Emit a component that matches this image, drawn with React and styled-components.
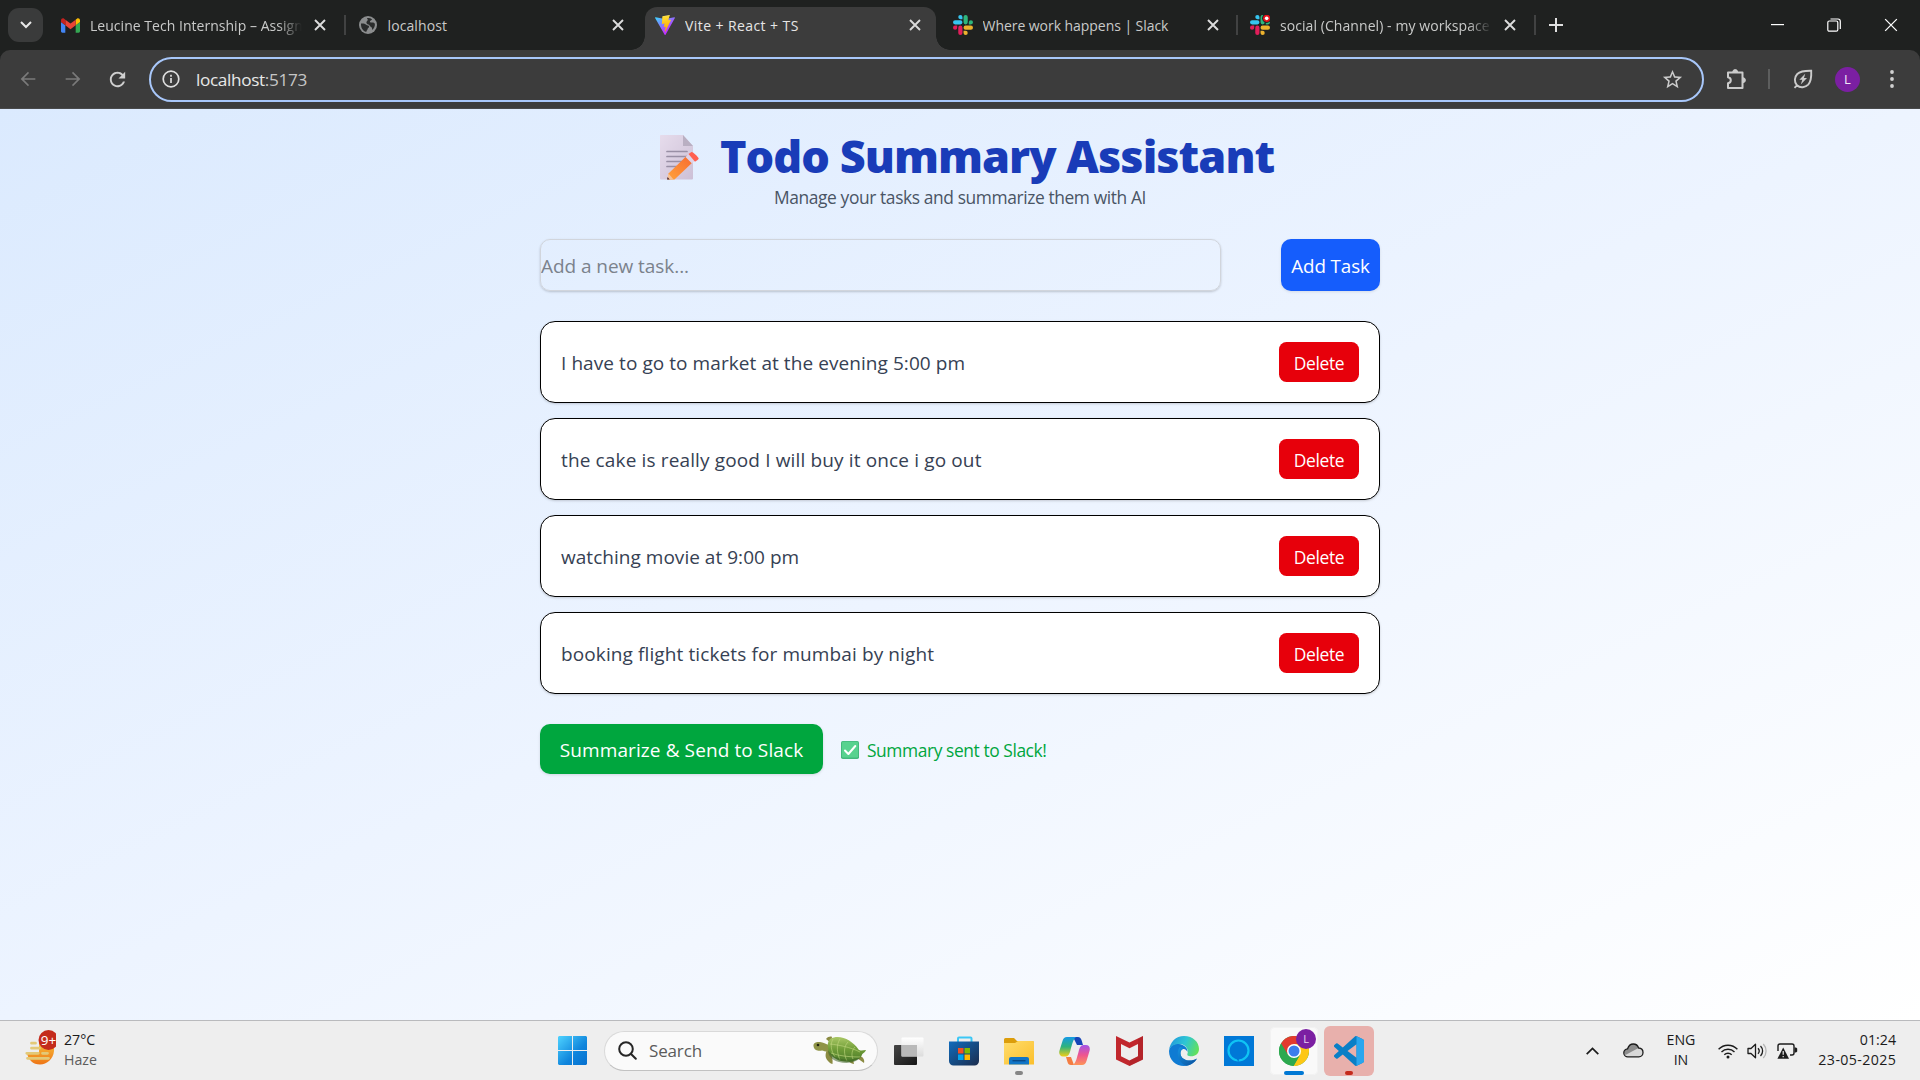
import React from "react";
import styled, { createGlobalStyle, css } from "styled-components";

const Global = createGlobalStyle`
  *, *::before, *::after { box-sizing: border-box; }
  body { margin: 0; overflow: hidden; font-family: "Open Sans", "Noto Sans", sans-serif; }
  button, input { font: inherit; border: 0; padding: 0; margin: 0; background: none; color: inherit; }
  svg { display: block; flex: none; }
  h1, p, ul { margin: 0; padding: 0; }
`;

const Screen = styled.div`
  width: 1920px;
  height: 1080px;
  display: flex;
  flex-direction: column;
  overflow: hidden;
`;

/* ---------- browser tab strip ---------- */

const TabStrip = styled.div`
  height: 50px;
  flex: none;
  display: flex;
  align-items: stretch;
  background: #1f2120;
  padding-left: 8px;
`;

const TabSearch = styled.button`
  width: 35px;
  height: 34px;
  margin: 8px 4px 0 0;
  border-radius: 11px;
  background: #3a3b3b;
  display: grid;
  place-items: center;
`;

const TabCell = styled.div`
  position: relative;
  width: 297.5px;
  flex: none;
  display: flex;
  align-items: center;
  padding: 0 14px 0 13px;
  color: ${(p) => (p.$active ? "#e6e6e6" : "#c9cac9")};
  ${(p) =>
    p.$divider &&
    css`
      &::after {
        content: "";
        position: absolute;
        right: -1px;
        top: 15px;
        width: 2px;
        height: 20px;
        background: #414242;
      }
    `}
  ${(p) =>
    p.$active &&
    css`
      &::before {
        content: "";
        position: absolute;
        z-index: 0;
        left: 3px;
        right: 4px;
        top: 7px;
        bottom: 0;
        border-radius: 12px 12px 0 0;
        background: #3c3c3c;
      }
    `}
`;

const TabFlare = styled.span`
  position: absolute;
  bottom: 0;
  width: 14px;
  height: 14px;
  ${(p) => (p.$side === "left" ? "left: -11px;" : "right: -10px;")}
  background: radial-gradient(
    circle at ${(p) => (p.$side === "left" ? "0 0" : "100% 0")},
    transparent 13.5px,
    #3c3c3c 14px
  );
`;

const TabIcon = styled.span`
  position: relative;
  width: 20px;
  margin-right: 10px;
  display: flex;
  justify-content: center;
`;

const TabTitle = styled.span`
  position: relative;
  width: 214px;
  padding-top: 1px;
  overflow: hidden;
  white-space: nowrap;
  font-size: 14px;
  line-height: 22px;
  letter-spacing: ${(p) => p.$track || 0}px;
  ${(p) => p.$fade && "mask-image: linear-gradient(90deg, #000 188px, transparent 212px);"}
`;

const TabClose = styled.button`
  position: relative;
  width: 20px;
  margin-left: 6px;
  display: grid;
  place-items: center;
`;

const NewTab = styled.button`
  width: 42px;
  display: grid;
  place-items: center;
`;

const WindowControls = styled.div`
  margin-left: auto;
  display: flex;
  align-items: center;
`;

const WindowButton = styled.button`
  width: ${(p) => p.$w}px;
  height: 50px;
  display: grid;
  place-items: center;
`;

/* ---------- browser toolbar ---------- */

const ToolbarBack = styled.div`
  flex: none;
  background: #1f2120;
`;

const Toolbar = styled.div`
  height: 59px;
  display: flex;
  align-items: center;
  background: #3c3c3c;
  border-radius: 10px 10px 0 0;
  box-shadow: inset 0 -1px #494a4b;
  padding: 0 0 1px 5px;
  color: #c7c7c7;
`;

const NavButton = styled.button`
  width: 45px;
  flex: none;
  height: 40px;
  display: grid;
  place-items: center;
  color: ${(p) => (p.$dim ? "#7a7a7a" : "#cfcfcf")};
`;

const Omnibox = styled.div`
  width: 1555px;
  flex: none;
  height: 45px;
  margin-left: 9px;
  display: flex;
  align-items: center;
  border: 2.5px solid #a8c7fa;
  border-radius: 23px;
  padding: 0 18px 0 11px;
`;

const Url = styled.span`
  flex: 1;
  margin-left: 16px;
  font-size: 17.2px;
  letter-spacing: ${(p) => p.$track || 0}px;
  color: #e8e8e8;
  span { color: #c6c6c6; }
`;

const ToolSlot = styled.div`
  width: ${(p) => p.$w}px;
  padding-left: ${(p) => p.$pl || 0}px;
  flex: none;
  display: grid;
  place-items: center;
`;

const ToolDivider = styled.div`
  width: 2px;
  height: 20px;
  background: #5d5e5e;
`;

const Avatar = styled.div`
  width: 25px;
  height: 25px;
  border-radius: 50%;
  display: grid;
  place-items: center;
  background: #7b1fa2;
  color: #f3e6f8;
  font-size: 13px;
`;

/* ---------- page ---------- */

const Page = styled.main`
  height: 911px;
  flex: none;
  padding-top: 21px;
  display: flex;
  flex-direction: column;
  align-items: center;
  background: linear-gradient(to bottom right, #dbeafe, #edf4ff 50%, #ffffff);
`;

const Column = styled.div`
  width: 840px;
  display: flex;
  flex-direction: column;
`;

const TitleRow = styled.div`
  height: 52px;
  display: flex;
  padding: 5px 0 0 119px;
  gap: 21px;
`;

const Title = styled.h1`
  margin-top: -4px;
  font-size: 45px;
  line-height: 50px;
  font-weight: 800;
  letter-spacing: ${(p) => p.$track || 0}px;
  white-space: nowrap;
  color: #193cb8;
`;

const Subtitle = styled.p`
  height: 30px;
  line-height: 31px;
  text-align: center;
  font-size: 17.4px;
  letter-spacing: ${(p) => p.$track || 0}px;
  color: #4a5565;
`;

const EntryRow = styled.div`
  margin-top: 27px;
  display: flex;
  justify-content: space-between;
`;

const TaskInput = styled.input`
  width: 681px;
  height: 52px;
  border: 1.25px solid #d1d5dc;
  border-radius: 10px;
  padding: 2px 0 0 0;
  box-shadow: 0 1px 3px rgba(0, 0, 0, 0.1), 0 1px 2px rgba(0, 0, 0, 0.1);
  font-size: 19px;
  letter-spacing: ${(p) => p.$track || 0}px;
  &::placeholder { color: #7b828c; opacity: 1; }
`;

const AddButton = styled.button`
  width: 99px;
  height: 52px;
  padding-top: 2px;
  border-radius: 10px;
  background: #155dfc;
  color: #fff;
  box-shadow: 0 1px 3px rgba(0, 0, 0, 0.1);
  font-size: 18.8px;
  white-space: nowrap;
  letter-spacing: ${(p) => p.$track || 0}px;
`;

const TaskList = styled.ul`
  list-style: none;
  margin-top: 30px;
  display: flex;
  flex-direction: column;
  gap: 15px;
`;

const TaskCard = styled.li`
  height: 82px;
  display: flex;
  align-items: center;
  justify-content: space-between;
  padding: 0 20px;
  border: 1px solid #000;
  border-radius: 15px;
  background: #fff;
  box-shadow: 0 1px 3px rgba(0, 0, 0, 0.1), 0 1px 2px rgba(0, 0, 0, 0.08);
`;

const TaskText = styled.span`
  padding-top: 2px;
  font-size: 19px;
  letter-spacing: ${(p) => p.$track || 0}px;
  color: #364153;
`;

const DeleteButton = styled.button`
  width: 80px;
  height: 40px;
  padding-top: 2px;
  border-radius: 7.5px;
  background: #e7000b;
  color: #fff;
  font-size: 17.4px;
  letter-spacing: ${(p) => p.$track || 0}px;
`;

const ActionRow = styled.div`
  margin-top: 30px;
  display: flex;
  align-items: center;
`;

const SummarizeButton = styled.button`
  width: 283px;
  height: 50px;
  padding-top: 1px;
  border-radius: 10px;
  background: #00a63e;
  color: #fff;
  box-shadow: 0 1px 3px rgba(0, 0, 0, 0.12);
  font-size: 19px;
  white-space: nowrap;
  letter-spacing: ${(p) => p.$track || 0}px;
`;

const Status = styled.div`
  margin-left: 18px;
  padding-top: 2px;
  display: flex;
  align-items: center;
  gap: 8px;
  font-size: 17.4px;
  letter-spacing: ${(p) => p.$track || 0}px;
  color: #00a63e;
`;

/* ---------- taskbar ---------- */

const Taskbar = styled.footer`
  height: 60px;
  flex: none;
  display: grid;
  grid-template-columns: 547px 1fr 346px;
  align-items: center;
  background: #eeeeee;
  border-top: 1px solid #b9babd;
`;

const Weather = styled.div`
  height: 42px;
  display: flex;
  gap: 8px;
  padding-left: 24px;
`;

const Stack = styled.div`
  display: flex;
  flex-direction: column;
  align-items: ${(p) => p.$align || "flex-start"};
  padding-bottom: 2px;
  font-size: 14.2px;
  line-height: 20px;
  color: #1b1b1b;
`;

const DateText = styled.span`
  letter-spacing: 0.4px;
  margin-right: -0.4px;
`;

const Muted = styled.span`
  color: #5c5c5c;
`;

const Apps = styled.div`
  display: flex;
  align-items: center;
  gap: 5px;
`;

const SearchPill = styled.div`
  width: 274px;
  height: 40px;
  margin: 0 1px 0 2px;
  display: flex;
  align-items: center;
  padding: 0 10px 0 13px;
  border: 1px solid #d9d9d9;
  border-bottom-color: #c2c2c2;
  border-radius: 20px;
  background: #fafafa;
  font-size: 17px;
  color: #5b5b5b;
`;

const SearchLabel = styled.span`
  flex: 1;
  margin-left: 12px;
  letter-spacing: -0.15px;
`;

const AppSlot = styled.div`
  position: relative;
  width: 50px;
  height: 50px;
  display: grid;
  place-items: center;
  border-radius: 6px;
  background: ${(p) => p.$bg || "transparent"};
  background-clip: padding-box;
  border: ${(p) => (p.$inset ? "1px solid transparent" : "0")};
  box-shadow: ${(p) => (p.$inset ? "inset 0 0 0 1px #f2f2f2" : "none")};
  &::after {
    content: "";
    position: absolute;
    bottom: ${(p) => (p.$inset ? 0 : 1)}px;
    width: ${(p) => p.$mark || 0}px;
    height: 4px;
    border-radius: 2px;
    background: ${(p) => p.$markColor || "transparent"};
  }
`;

const Badge = styled.span`
  position: absolute;
  right: 2px;
  top: 2px;
  width: 20px;
  height: 20px;
  border-radius: 50%;
  display: grid;
  place-items: center;
  background: #7b1fa2;
  color: #e9d2f2;
  font-size: 11px;
`;

const Tray = styled.div`
  display: flex;
  align-items: center;
  padding-left: 12px;
`;

const TrayItem = styled.div`
  width: ${(p) => p.$w}px;
  margin-left: ${(p) => p.$ml || 0}px;
  display: flex;
  justify-content: ${(p) => p.$justify || "center"};
`;

/* ---------- icons ---------- */

const Cross = ({ size = 12, w = 1.9, color = "#dcdcdc" }) => (
  <svg width={size} height={size} viewBox="0 0 12 12" stroke={color} strokeWidth={w} fill="none">
    <path d="M1 1l10 10M11 1L1 11" />
  </svg>
);

const Gmail = () => (
  <svg width="19" height="15" viewBox="52 42 88 66">
    <path fill="#4285f4" d="M58 108h14V74L52 59v43c0 3.32 2.69 6 6 6" />
    <path fill="#34a853" d="M120 108h14c3.32 0 6-2.69 6-6V59l-20 15" />
    <path fill="#fbbc04" d="M120 48v26l20-15v-8c0-7.42-8.47-11.65-14.4-7.2" />
    <path fill="#ea4335" d="M72 74V48l24 18 24-18v26L96 92" />
    <path fill="#c5221f" d="M52 51v8l20 15V48l-5.6-4.2c-5.94-4.45-14.4-.22-14.4 7.2" />
  </svg>
);

const Globe = () => (
  <svg width="18" height="18" viewBox="0 0 18 18">
    <circle cx="9" cy="9" r="9" fill="#8b8d8e" />
    <path
      fill="#2a2c2c"
      d="M2 7.5c2.4-.3 4 .2 5.2 1.3 1 .9 2.6.4 2.9 1.6.2 1-1.3 1.400-1.500 2.600-.1.9-1 1.800-1.400 2.900C4 15.100 1.700 12 2 7.500zM8 2.200c1.500-.4 3.500-.1 5 1-.3 1.200-1.500 1-2 2-.4.9.7 1.500 2 1.300 1.100-.2 2.200.3 2.900 1.200.2 2.300-.8 4.900-2.800 6.300.2-1.500-.2-2.900-1.300-3.300-1.300-.5-1-2-2.300-2.300C8 8.100 7 7 7.500 5.900 7.800 5 9 4.500 8.800 3.600 8.600 3 8 2.900 8 2.200z"
    />
  </svg>
);

const Vite = () => (
  <svg width="20" height="20" viewBox="0 0 256 257">
    <defs>
      <linearGradient id="viteA" x1="-.8%" x2="57.6%" y1="7.700%" y2="78.400%">
        <stop offset="0%" stopColor="#41d1ff" />
        <stop offset="100%" stopColor="#bd34fe" />
      </linearGradient>
      <linearGradient id="viteB" x1="43.400%" x2="50.300%" y1="2.200%" y2="89%">
        <stop offset="0%" stopColor="#ffea83" />
        <stop offset="8%" stopColor="#ffdd35" />
        <stop offset="100%" stopColor="#ffa800" />
      </linearGradient>
    </defs>
    <path fill="url(#viteA)" d="M255.153 37.938L134.897 252.976c-2.483 4.440-8.862 4.466-11.382.048L.875 37.958c-2.746-4.814 1.371-10.646 6.827-9.670l120.385 21.517a6.537 6.537 0 0 0 2.322-.004l117.867-21.483c5.438-.991 9.574 4.796 6.877 9.620Z" />
    <path fill="url(#viteB)" d="M185.432.063L96.440 17.501a3.268 3.268 0 0 0-2.634 3.014l-5.474 92.456a3.268 3.268 0 0 0 3.997 3.378l24.777-5.718c2.318-.535 4.413 1.507 3.936 3.838l-7.361 36.047c-.495 2.426 1.782 4.500 4.151 3.780l15.304-4.649c2.372-.720 4.652 1.360 4.150 3.788l-11.698 56.621c-.732 3.542 3.979 5.473 5.943 2.437l1.313-2.028l72.516-144.720c1.215-2.423-.880-5.186-3.540-4.672l-25.505 4.922c-2.396.462-4.435-1.770-3.759-4.114l16.646-57.705c.677-2.350-1.370-4.583-3.769-4.113Z" />
  </svg>
);

const Slack = ({ alert }) => (
  <svg width="20" height="20" viewBox="0 0 24 24">
    <path fill="#e01e5a" d="M5.042 15.165a2.528 2.528 0 0 1-2.520 2.523A2.528 2.528 0 0 1 0 15.165a2.527 2.527 0 0 1 2.522-2.520h2.520v2.520zM6.313 15.165a2.527 2.527 0 0 1 2.521-2.520 2.527 2.527 0 0 1 2.521 2.520v6.313A2.528 2.528 0 0 1 8.834 24a2.528 2.528 0 0 1-2.521-2.522v-6.313z" />
    <path fill="#36c5f0" d="M8.834 5.042a2.528 2.528 0 0 1-2.521-2.520A2.528 2.528 0 0 1 8.834 0a2.528 2.528 0 0 1 2.521 2.522v2.520H8.834zM8.834 6.313a2.528 2.528 0 0 1 2.521 2.521 2.528 2.528 0 0 1-2.521 2.521H2.522A2.528 2.528 0 0 1 0 8.834a2.528 2.528 0 0 1 2.522-2.521h6.312z" />
    <path fill="#2eb67d" d="M18.956 8.834a2.528 2.528 0 0 1 2.522-2.521A2.528 2.528 0 0 1 24 8.834a2.528 2.528 0 0 1-2.522 2.521h-2.522V8.834zM17.688 8.834a2.528 2.528 0 0 1-2.523 2.521 2.527 2.527 0 0 1-2.520-2.521V2.522A2.527 2.527 0 0 1 15.165 0a2.528 2.528 0 0 1 2.523 2.522v6.312z" />
    <path fill="#ecb22e" d="M15.165 18.956a2.528 2.528 0 0 1 2.523 2.522A2.528 2.528 0 0 1 15.165 24a2.527 2.527 0 0 1-2.520-2.522v-2.522h2.520zM15.165 17.688a2.527 2.527 0 0 1-2.520-2.523 2.526 2.526 0 0 1 2.520-2.520h6.313A2.527 2.527 0 0 1 24 15.165a2.528 2.528 0 0 1-2.522 2.523h-6.313z" />
    {alert && (
      <>
        <circle cx="20" cy="4" r="5.500" fill="#1f2120" />
        <circle cx="20" cy="4" r="4.300" fill="#e8111a" />
        <circle cx="20" cy="4" r="2.200" fill="#fff" />
      </>
    )}
  </svg>
);

const Back = ({ flip }) => (
  <svg width="22" height="22" viewBox="0 0 24 24" fill="currentColor" transform={flip ? "scale(-1 1)" : undefined}>
    <path d="M20 11.100H7.500l5.600-5.700L12 4.200 4 12l8 7.800 1.100-1.200-5.600-5.700H20z" />
  </svg>
);

const Reload = () => (
  <svg width="23" height="23" viewBox="0 0 24 24" fill="currentColor">
    <path d="M17.650 6.350C16.200 4.900 14.210 4 12 4c-4.420 0-7.990 3.580-7.990 8s3.570 8 7.990 8c3.730 0 6.840-2.550 7.730-6h-2.080c-.820 2.330-3.040 4-5.650 4-3.310 0-6-2.690-6-6s2.690-6 6-6c1.660 0 3.140.690 4.220 1.780L13 11h7V4l-2.350 2.350z" />
  </svg>
);

const Info = () => (
  <svg width="18" height="18" viewBox="0 0 18 18" fill="none" stroke="#dedede" strokeWidth="1.700">
    <circle cx="9" cy="9" r="7.800" />
    <path d="M9 8v5M9 4.800v1.900" />
  </svg>
);

const Star = () => (
  <svg width="23" height="23" viewBox="0 0 24 24" fill="#cbcbcb">
    <path d="M22 9.240l-7.190-.620L12 2 9.190 8.630 2 9.240l5.460 4.730L5.820 21 12 17.270 18.180 21l-1.630-7.030L22 9.240zM12 15.400l-3.760 2.270 1-4.280-3.320-2.880 4.380-.380L12 6.100l1.710 4.040 4.380.380-3.320 2.880 1 4.280L12 15.400z" />
  </svg>
);

const Puzzle = () => (
  <svg width="23" height="23" viewBox="0 0 23 23">
    <path d="M3 4.500h14.500v15.500H3v-4.800c1.700-.3 2.800-1.500 2.800-3s-1.100-2.700-2.800-3z" fill="none" stroke="#cbcbcb" strokeWidth="2" strokeLinejoin="round" />
    <path d="M7.800 4a2.400 2.400 0 0 1 4.800 0zM18 9.800a2.400 2.400 0 0 1 0 4.800z" fill="#cbcbcb" stroke="#cbcbcb" />
  </svg>
);

const Leaf = () => (
  <svg width="20" height="20" viewBox="0 0 20 20" fill="none" stroke="#cbcbcb" strokeWidth="1.900">
    <path d="M4 16.300C.8 13 1.500 8 4.300 5 7.400 2 12.500 1.700 18.200 1.800c.3 5.700-.2 10.800-3 13.800-3 3-7.900 3.700-11.200.7zM4 16.300l-2.500 2.500" />
    <path d="M12.200 4.800L6.300 10.800h3l-1.500 4.700L14 8.900h-3z" fill="#cbcbcb" stroke="none" />
  </svg>
);

const Memo = () => (
  <svg width="40" height="45" viewBox="0 0 40 45">
    <defs>
      <linearGradient id="sheet" x1="0" y1="0" x2="1" y2="1">
        <stop offset="0" stopColor="#e6dcec" />
        <stop offset="1" stopColor="#cdc0d6" />
      </linearGradient>
      <linearGradient id="pen" x1="0" y1="1" x2="1" y2="0">
        <stop offset="0" stopColor="#ffa23c" />
        <stop offset="1" stopColor="#f7682f" />
      </linearGradient>
    </defs>
    <path d="M1.500 0H24l10 11v32.500a1 1 0 0 1-1 1H2a1 1 0 0 1-1-1V.8z" fill="url(#sheet)" />
    <path d="M24 0l10 11H24z" fill="#b9afc2" />
    <path d="M8 16.500h20M8 21.500h20M8 26.500h15M8 31.500h10" stroke="#998fa5" strokeWidth="1.700" strokeLinecap="round" />
    <path d="M9.500 38.500L28 20.500l6 6.500-18.500 17.500H9z" fill="url(#pen)" />
    <path d="M9.500 38.500l5 5.900H8z" fill="#f6c195" />
    <path d="M8.600 42l2.100 2.500H8z" fill="#4b2632" />
    <path d="M26.500 22l3-3 6.500 6.500-3 3z" fill="#dfd3e8" />
    <path d="M29.500 19l3-2c1-.6 7 5 7.200 6.500.1 1-2.600 2.300-3.700 3.200z" fill="#ff5f50" />
  </svg>
);

const CheckBox = () => (
  <svg width="18" height="18" viewBox="0 0 18 18">
    <rect width="18" height="18" rx="1.800" fill="#43b97c" />
    <rect x="1" y=".7" width="16" height="15.800" rx="1.200" fill="#58d28f" />
    <path d="M4 9.500l3.400 3.500L14.300 5" fill="none" stroke="#fff" strokeWidth="2" strokeLinecap="round" strokeLinejoin="round" />
  </svg>
);

const Haze = () => (
  <svg width="32" height="38" viewBox="0 0 32 38">
    <defs>
      <linearGradient id="sun" x1="0" y1="0" x2="0" y2="1">
        <stop offset="0" stopColor="#f9c23c" />
        <stop offset="1" stopColor="#ee7516" />
      </linearGradient>
    </defs>
    <path d="M3 22.500h12V11l14 2c1 2 1.300 5 1 8C29.300 29 23 34.500 16 34.500S4 30 3 22.500z" fill="url(#sun)" />
    <path d="M7.500 13.200h4M7.500 18.200h8M2.800 23.300h11.500M18.500 23.300h5M3.500 28.300h21" stroke="#e3c978" strokeWidth="2.800" strokeLinecap="round" />
    <circle cx="24.500" cy="10" r="10" fill="#c42b1c" />
    <text x="24.500" y="15" textAnchor="middle" fontSize="13.500" fill="#fff">9+</text>
  </svg>
);

const WinLogo = () => (
  <svg width="29" height="29" viewBox="0 0 29 29">
    <defs>
      <linearGradient id="win" gradientUnits="userSpaceOnUse" x1="0" y1="0" x2="29" y2="29">
        <stop offset="0" stopColor="#4fd3ff" />
        <stop offset=".6" stopColor="#0f85dc" />
        <stop offset="1" stopColor="#0670cf" />
      </linearGradient>
    </defs>
    <path fill="url(#win)" d="M1 0h13v14H0V1zM15 0h13l1 1v13H15zM0 15h14v14H1l-1-1zM15 15h14v13l-1 1H15z" />
  </svg>
);

const Magnifier = () => (
  <svg width="19" height="19" viewBox="0 0 19 19" fill="none" stroke="#262626" strokeWidth="2">
    <circle cx="8" cy="8" r="6.800" />
    <path d="M12.800 12.800l5 5" strokeLinecap="round" />
  </svg>
);

const Turtle = () => (
  <svg width="54" height="29" viewBox="0 0 54 29">
    <defs>
      <linearGradient id="shell" x1="0" y1="0" x2="0" y2="1">
        <stop offset="0" stopColor="#a9c765" />
        <stop offset=".5" stopColor="#6f9c37" />
        <stop offset="1" stopColor="#4b7a2a" />
      </linearGradient>
    </defs>
    <path d="M14 14c-2 4-2 8 1 11 1.500 2 3.500 3 4.500 3 .5-4-.5-8-2-12zM34 24c2 1 4 4 7 4l-1-5zM44 22l7 5c1-3-1-6-4-7z" fill="#8b8b42" />
    <path d="M13 3c2-2.500 5-3 6-2l-1 6z" fill="#8b8b42" />
    <path d="M.5 10C0 6.500 4 5.500 7 6c3 .3 6 2 9 3l2 6c-4 2-7-.5-9-.5-3 .5-8 .5-8.500-4.500z" fill="#8f9448" />
    <path d="M15 12C14 5 17 2 21 1.500c9-2 19 4 24.500 12 1.500 1.500 4 1 7.500.5-1 3-4 3.500-4 5-3 6-12 8-21 6-7-2-12-6-13-13z" fill="url(#shell)" />
    <path d="M20 3c-3 5-2 12 2 18M27 3c-4 6-3 14 0 21M35 6c-5 5-4 13-1 19M42 11c-3 3-4 8-2 12M17 8c9 1 20 3 30 8M18 17c8 3 18 4 29 4" fill="none" stroke="#c2d982" strokeWidth=".8" opacity=".75" />
    <path d="M15 14c5 8 18 13 33 7-5 6-14 7-22 5-7-2-11-6-11-12z" fill="#3f6426" opacity=".55" />
    <circle cx="5" cy="9" r="1.300" fill="#22240f" />
  </svg>
);

const TaskView = () => (
  <svg width="30" height="28" viewBox="0 0 30 28">
    <defs>
      <linearGradient id="tv" x1="0" y1="0" x2="1" y2="1">
        <stop offset="0" stopColor="#454545" />
        <stop offset="1" stopColor="#161616" />
      </linearGradient>
      <linearGradient id="tv2" x1="0" y1="0" x2="0" y2="1">
        <stop offset="0" stopColor="#ffffff" />
        <stop offset="1" stopColor="#dcdcdc" />
      </linearGradient>
    </defs>
    <rect y="8" width="23" height="20" rx="1" fill="url(#tv)" />
    <rect x="7.500" y=".5" width="22" height="19" rx="1" fill="url(#tv2)" />
    <rect x="7.500" y="8" width="15.500" height="11.500" fill="#b9b9b9" />
  </svg>
);

const Store = () => (
  <svg width="30" height="30" viewBox="0 0 30 30">
    <defs>
      <linearGradient id="st" x1="0" y1="0" x2="1" y2="1">
        <stop offset="0" stopColor="#0f6cbd" />
        <stop offset="1" stopColor="#1b2c4d" />
      </linearGradient>
    </defs>
    <path d="M9 7V2.500a1 1 0 0 1 1-1h11.500a1 1 0 0 1 1 1V7" fill="none" stroke="#3cc7f5" strokeWidth="2" />
    <path d="M0 5.500h30V25a4.500 4.500 0 0 1-4.500 4.500h-21A4.500 4.500 0 0 1 0 25z" fill="url(#st)" />
    <path d="M9 12h5.500v5.500H9z" fill="#f25022" />
    <path d="M15.500 12H21v5.500h-5.500z" fill="#7fba00" />
    <path d="M9 18.500h5.500V24H9z" fill="#00a4ef" />
    <path d="M15.500 18.500H21V24h-5.500z" fill="#ffb900" />
  </svg>
);

const Folder = () => (
  <svg width="30" height="28" viewBox="0 0 30 28">
    <defs>
      <linearGradient id="fo" x1="0" y1="0" x2="1" y2="1">
        <stop offset="0" stopColor="#ffdc6b" />
        <stop offset="1" stopColor="#fbbf2c" />
      </linearGradient>
    </defs>
    <path d="M0 2.500A1.500 1.500 0 0 1 1.500 1H10l3 3h15.500A1.500 1.500 0 0 1 30 5.500V12H0z" fill="#dc9d0b" />
    <path d="M0 6h11l3-2h14.500A1.500 1.500 0 0 1 30 5.500V27.500H0z" fill="url(#fo)" />
    <path d="M5 27.500V22a2 2 0 0 1 2-2h16a2 2 0 0 1 2 2v5.500z" fill="#1175c6" />
    <path d="M8.500 23.700h13" stroke="#0a4a88" strokeWidth="1.400" />
  </svg>
);

const Copilot = () => (
  <svg width="31" height="28" viewBox="0 0 31 28">
    <defs>
      <linearGradient id="cpA" x1="0" y1="0" x2="0" y2="1">
        <stop offset="0" stopColor="#1599e6" />
        <stop offset=".5" stopColor="#2fb37c" />
        <stop offset="1" stopColor="#f1cf16" />
      </linearGradient>
      <linearGradient id="cpB" x1="0" y1="0" x2="0" y2="1">
        <stop offset="0" stopColor="#a353e8" />
        <stop offset=".5" stopColor="#ee5590" />
        <stop offset="1" stopColor="#fd9457" />
      </linearGradient>
    </defs>
    <path d="M14 0h5c2 0 3 1.500 3.500 3L24 8h-6z" fill="#1746b8" />
    <path d="M8 0h9c-3 2-4 8-5.500 13-1 4-2 6.500-5 6.500H4c-3 0-4.500-2.500-3.500-6L3.500 4C4.300 1.300 5.500 0 8 0z" fill="url(#cpA)" />
    <path d="M7 20h5l3 8h-3c-2 0-3-1-3.500-3z" fill="#f47d42" />
    <path d="M23 28h-9c3-2 4-8 5.500-13 1-4 2-7 5-7H27c3 0 4.500 2.500 3.500 6L27.500 24c-.8 2.700-2 4-4.500 4z" fill="url(#cpB)" />
  </svg>
);

const McAfee = () => (
  <svg width="27" height="30" viewBox="0 0 27 30">
    <path fill="#c1272d" d="M0 0l13.500 6.500L27 0v23.500L13.500 30 0 23.500zM5 8v12.300l8.500 4.200 8.500-4.200V8l-8.500 4.200z" fillRule="evenodd" />
    <path fill="#9f2024" d="M22 3l5-3v23.500L13.500 30v-5.500l8.500-4.200z" opacity=".35" />
  </svg>
);

const Edge = () => (
  <svg width="30" height="30" viewBox="0 0 30 30">
    <defs>
      <linearGradient id="edA" x1="0" y1=".3" x2="1" y2=".6">
        <stop offset="0" stopColor="#2199dc" />
        <stop offset=".5" stopColor="#2ec6d4" />
        <stop offset="1" stopColor="#63e15a" />
      </linearGradient>
      <linearGradient id="edB" x1="0" y1="0" x2="1" y2="1">
        <stop offset="0" stopColor="#1592e2" />
        <stop offset="1" stopColor="#0b4f9c" />
      </linearGradient>
    </defs>
    <path d="M0 15C1 9 6 7 10 8c5 .5 9 4 8.500 8C16 10.500 11 13 11.500 18c.8 6.500 10 8.500 16.500 4.500C25.500 27 20.500 30 15 30 7 30 0 24 0 15z" fill="#0f7bd3" />
    <path d="M11 11C7 15 8 26 17 29.800 22 29 26 26.500 28 22.500c-6.500 4-15.700 2-16.500-4.500-.3-3 1-5.500 3-6z" fill="url(#edB)" />
    <path d="M0 14.500C.8 6 7 0 15 0c9 0 15 6 15 13 0 6-5.500 8-10 7-2.500-.6-1.500-2-1.200-4C19 11.500 15 8 10 8c-5 0-9 2.500-10 6.500z" fill="url(#edA)" />
  </svg>
);

const Alexa = () => (
  <svg width="30" height="30" viewBox="0 0 30 30">
    <rect width="30" height="30" fill="#0078d7" />
    <circle cx="14.500" cy="14.500" r="10" fill="none" stroke="#0fc4f4" strokeWidth="2.200" />
    <path d="M12.500 23l2.200 3 .2-3.500z" fill="#0078d7" />
  </svg>
);

const Chrome = () => (
  <svg width="30" height="30" viewBox="0 0 30 30">
    <circle cx="15" cy="15" r="15" fill="#2da94f" />
    <path d="M15 8h13.300A15 15 0 0 1 14.500 30l6.600-11.500z" fill="#fdc715" />
    <path d="M2 7.500A15 15 0 0 1 28.300 8H15l-6 11z" fill="#e33b2e" />
    <path d="M2 7.500L9 19a7 7 0 0 0 12 0l-6.500 11A15 15 0 0 1 2 7.500z" fill="#2da94f" />
    <circle cx="15" cy="15" r="7" fill="#fff" />
    <circle cx="15" cy="15" r="5.500" fill="#3b7ded" />
  </svg>
);

const VSCode = () => (
  <svg width="30" height="30" viewBox="0 0 24 24">
    <path fill="#0a7fc6" d="M23.150 2.587L18.210.210a1.494 1.494 0 0 0-1.705.290l-9.460 8.630-4.120-3.128a.999.999 0 0 0-1.276.057L.327 7.261A1 1 0 0 0 .326 8.740L3.899 12 .326 15.260a1 1 0 0 0 .001 1.479L1.650 17.940a.999.999 0 0 0 1.276.057l4.120-3.128 9.460 8.630a1.492 1.492 0 0 0 1.704.290l4.942-2.377A1.500 1.500 0 0 0 24 20.060V3.939a1.500 1.500 0 0 0-.850-1.352zm-5.146 14.861L10.826 12l7.178-5.448v10.896z" />
    <path fill="#2aa6ee" d="M18 .150l5.150 2.437A1.500 1.500 0 0 1 24 3.939V20.060a1.500 1.500 0 0 1-.850 1.352L18 23.850z" />
  </svg>
);

const Chevron = () => (
  <svg width="13" height="8" viewBox="0 0 13 8" fill="none" stroke="#1c1c1c" strokeWidth="1.700">
    <path d="M.7 7.200L6.500 1.400l5.800 5.800" />
  </svg>
);

const Cloud = () => (
  <svg width="21" height="15" viewBox="0 0 21 15">
    <path d="M5 13.800a4 4 0 0 1-.4-8C5.500 3 7.500 1 10.300 1c2.500 0 4.500 1.500 5.300 4 2.500.2 4.400 2 4.400 4.400 0 2.500-1.800 4.400-4.200 4.400z" fill="#d8d8d8" />
    <path d="M1 9.500c.3-2 1.600-3.500 3.600-3.700C5.500 3 7.500 1 10.300 1c2.500 0 4.500 1.500 5.300 4L8 9l-5.500 3z" fill="#8d8d8d" />
    <path d="M5 13.800a4 4 0 0 1-.4-8C5.500 3 7.500 1 10.300 1c2.500 0 4.500 1.500 5.300 4 2.500.2 4.400 2 4.400 4.400 0 2.500-1.800 4.400-4.200 4.400z" fill="none" stroke="#1c1c1c" strokeWidth="1.300" />
  </svg>
);

const Wifi = () => (
  <svg width="20" height="16" viewBox="0 0 20 16" fill="none" stroke="#1c1c1c" strokeWidth="1.400">
    <path d="M.6 6.200a13 13 0 0 1 18.800 0M3.500 9a9.200 9.200 0 0 1 13 0M6.300 11.700a5.300 5.300 0 0 1 7.400 0" />
    <circle cx="10" cy="14" r="1.500" fill="#1c1c1c" stroke="none" />
  </svg>
);

const Speaker = () => (
  <svg width="21" height="16" viewBox="0 0 21 16" fill="none" stroke="#1c1c1c" strokeWidth="1.300">
    <path d="M1 5.500h3L8.500 1.200v13.600L4 10.500H1z" strokeLinejoin="round" />
    <path d="M11 5.300c1.400 1.500 1.400 3.900 0 5.400M13.500 3c2.800 2.800 2.800 7.200 0 10" />
    <path d="M16.300 1c3.700 4 3.700 10 0 14" stroke="#b5b5b5" />
  </svg>
);

const Battery = () => (
  <svg width="21" height="17" viewBox="0 0 21 17">
    <path d="M1 9V4a2 2 0 0 1 2-2h12a2 2 0 0 1 2 2v7a2 2 0 0 1-2 2h-2" fill="none" stroke="#1c1c1c" strokeWidth="1.400" />
    <path d="M17.500 5.500h1.500l1.200 1v3l-1.200 1h-1.500z" fill="#1c1c1c" />
    <path d="M6.200 5.500L12 16.800H.4z" fill="#1c1c1c" />
    <path d="M6.200 9v3.800M6.200 14v1.300" stroke="#eee" strokeWidth="1.200" />
  </svg>
);

/* ---------- data ---------- */

const tabs = [
  { title: "Leucine Tech Internship – Assign", icon: <Gmail />, divider: true, fade: true, track: 0.03 },
  { title: "localhost", icon: <Globe />, track: 0.1 },
  { title: "Vite + React + TS", icon: <Vite />, active: true, track: 0.42 },
  { title: "Where work happens | Slack", icon: <Slack />, divider: true, track: -0.05 },
  { title: "social (Channel) - my workspace", icon: <Slack alert />, divider: true, fade: true, track: 0.07 },
];

const tasks = [
  { text: "I have to go to market at the evening 5:00 pm", track: 0.07 },
  { text: "the cake is really good I will buy it once i go out", track: 0.14 },
  { text: "watching movie at 9:00 pm", track: 0.03 },
  { text: "booking flight tickets for mumbai by night", track: 0.11 },
];

export default function App() {
  return (
    <Screen>
      <Global />
      <TabStrip>
        <TabSearch>
          <svg width="12" height="8" viewBox="0 0 12 8" fill="none" stroke="#e8e8e8" strokeWidth="2">
            <path d="M1 1l5 5 5-5" />
          </svg>
        </TabSearch>
        {tabs.map((t) => (
          <TabCell key={t.title} $active={t.active} $divider={t.divider}>
            {t.active && (
              <>
                <TabFlare $side="left" />
                <TabFlare $side="right" />
              </>
            )}
            <TabIcon>{t.icon}</TabIcon>
            <TabTitle $fade={t.fade} $track={t.track}>
              {t.title}
            </TabTitle>
            <TabClose>
              <Cross />
            </TabClose>
          </TabCell>
        ))}
        <NewTab>
          <svg width="14" height="14" viewBox="0 0 14 14" stroke="#e0e0e0" strokeWidth="2">
            <path d="M7 0v14M0 7h14" />
          </svg>
        </NewTab>
        <WindowControls>
          <WindowButton $w={56}>
            <svg width="13" height="2" viewBox="0 0 13 2">
              <path d="M0 0h13v1.200H0z" fill="#fff" />
            </svg>
          </WindowButton>
          <WindowButton $w={57}>
            <svg width="14" height="14" viewBox="0 0 14 14" fill="none" stroke="#fff" strokeWidth="1.200">
              <rect x=".8" y="3" width="10" height="10.200" rx="1.500" />
              <path d="M3.500 1h7.500a2.400 2.400 0 0 1 2.300 2.400V11" />
            </svg>
          </WindowButton>
          <WindowButton $w={58}>
            <Cross size={14} w={1.100} color="#fff" />
          </WindowButton>
        </WindowControls>
      </TabStrip>

      <ToolbarBack>
        <Toolbar>
          <NavButton $dim>
            <Back />
          </NavButton>
          <NavButton $dim>
            <Back flip />
          </NavButton>
          <NavButton>
            <Reload />
          </NavButton>
          <Omnibox>
            <Info />
            <Url $track={-0.35}>
              localhost<span>:5173</span>
            </Url>
            <Star />
          </Omnibox>
          <ToolSlot $w={64}>
            <Puzzle />
          </ToolSlot>
          <ToolDivider />
          <ToolSlot $w={65}>
            <Leaf />
          </ToolSlot>
          <ToolSlot $w={24}>
            <Avatar>L</Avatar>
          </ToolSlot>
          <ToolSlot $w={61} $pl={5}>
            <svg width="4" height="18" viewBox="0 0 4 18" fill="#d0d0d0">
              <circle cx="2" cy="2" r="1.900" />
              <circle cx="2" cy="9" r="1.900" />
              <circle cx="2" cy="16" r="1.900" />
            </svg>
          </ToolSlot>
        </Toolbar>
      </ToolbarBack>

      <Page>
        <Column>
          <TitleRow>
            <Memo />
            <Title $track={-0.97}>Todo Summary Assistant</Title>
          </TitleRow>
          <Subtitle $track={-0.4}>Manage your tasks and summarize them with AI</Subtitle>
          <EntryRow>
            <TaskInput placeholder="Add a new task..." $track={-0.06} />
            <AddButton $track={-0.1}>Add Task</AddButton>
          </EntryRow>
          <TaskList>
            {tasks.map((t) => (
              <TaskCard key={t.text}>
                <TaskText $track={t.track}>{t.text}</TaskText>
                <DeleteButton $track={-0.35}>Delete</DeleteButton>
              </TaskCard>
            ))}
          </TaskList>
          <ActionRow>
            <SummarizeButton $track={0.1}>Summarize &amp; Send to Slack</SummarizeButton>
            <Status $track={-0.42}>
              <CheckBox />
              Summary sent to Slack!
            </Status>
          </ActionRow>
        </Column>
      </Page>

      <Taskbar>
        <Weather>
          <Haze />
          <Stack>
            <span>27°C</span>
            <Muted>Haze</Muted>
          </Stack>
        </Weather>
        <Apps>
          <AppSlot>
            <WinLogo />
          </AppSlot>
          <SearchPill>
            <Magnifier />
            <SearchLabel>Search</SearchLabel>
            <Turtle />
          </SearchPill>
          <AppSlot><TaskView /></AppSlot>
          <AppSlot><Store /></AppSlot>
          <AppSlot $mark={8} $markColor="#868686"><Folder /></AppSlot>
          <AppSlot><Copilot /></AppSlot>
          <AppSlot><McAfee /></AppSlot>
          <AppSlot><Edge /></AppSlot>
          <AppSlot><Alexa /></AppSlot>
          <AppSlot $bg="#f9f9f9" $inset $mark={20} $markColor="#0078d4">
            <Chrome />
            <Badge>L</Badge>
          </AppSlot>
          <AppSlot $bg="#e8b0ac" $mark={8} $markColor="#c42b1c"><VSCode /></AppSlot>
        </Apps>
        <Tray>
          <TrayItem $w={13}><Chevron /></TrayItem>
          <TrayItem $w={21} $ml={24}><Cloud /></TrayItem>
          <TrayItem $w={40} $ml={17}>
            <Stack $align="center">
              <span>ENG</span>
              <span>IN</span>
            </Stack>
          </TrayItem>
          <TrayItem $w={20} $ml={17}><Wifi /></TrayItem>
          <TrayItem $w={21} $ml={9}><Speaker /></TrayItem>
          <TrayItem $w={21} $ml={9}><Battery /></TrayItem>
          <TrayItem $w={90} $ml={8} $justify="flex-end">
            <Stack $align="flex-end">
              <span>01:24</span>
              <DateText>23-05-2025</DateText>
            </Stack>
          </TrayItem>
        </Tray>
      </Taskbar>
    </Screen>
  );
}
